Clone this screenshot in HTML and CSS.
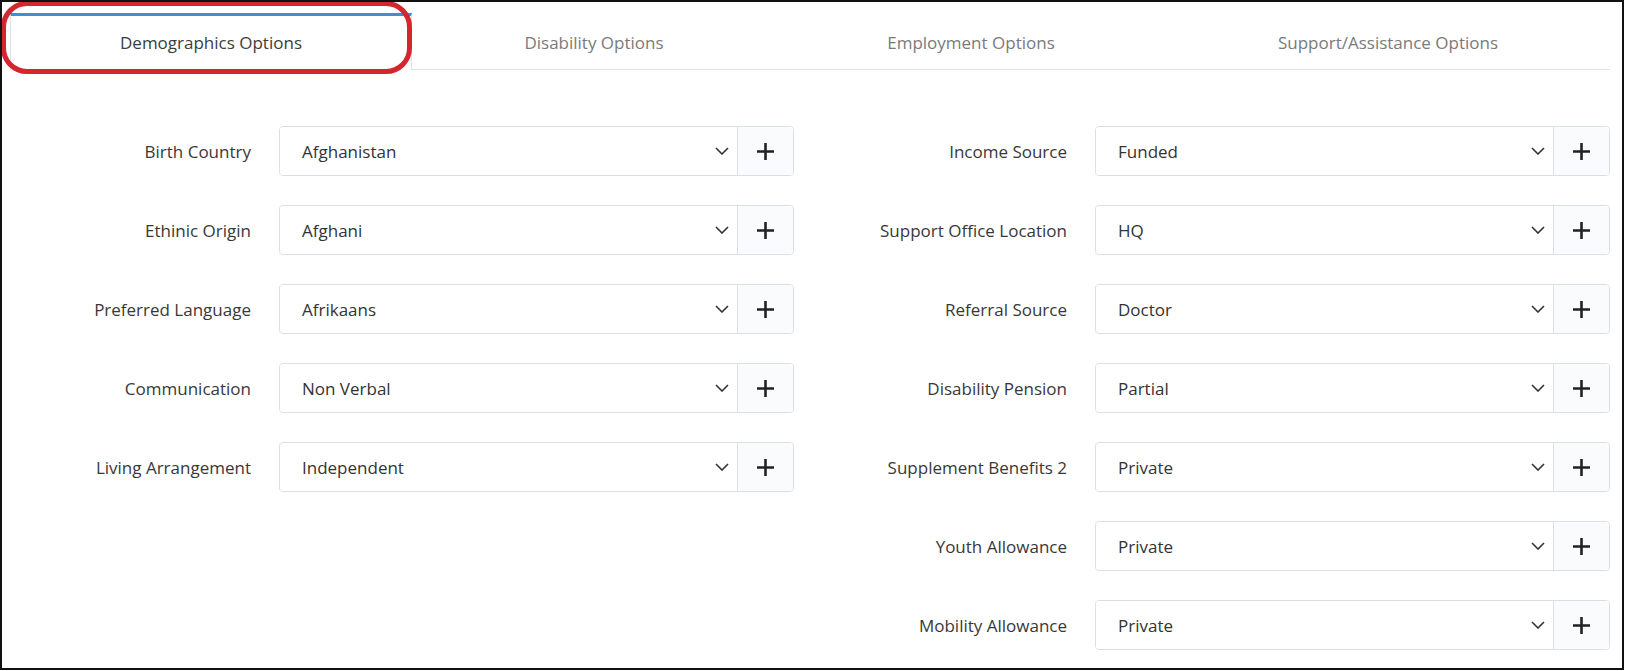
FILE: index.html
```html
<!DOCTYPE html>
<html lang="en">
<head>
<meta charset="utf-8">
<title>Demographics Options</title>
<link rel="stylesheet" href="styles.css">
</head>
<body>
<div class="frame">
  <div class="annot"></div>
  <nav class="tabs">
    <div class="tab active t1">Demographics Options</div>
    <div class="tab t2">Disability Options</div>
    <div class="tab t3">Employment Options</div>
    <div class="tab t4">Support/Assistance Options</div>
  </nav>
  <div class="form">
    <div class="col">
      <div class="row"><div class="label">Birth Country</div><div class="box"><div class="select"><span>Afghanistan</span><svg class="chev" width="14" height="8" viewBox="0 0 14 8"><polyline points="1,1 7,7 13,1"/></svg></div><div class="add"><svg width="17" height="17" viewBox="0 0 17 17"><path d="M8.5 0V17M0 8.5H17"/></svg></div></div></div>
      <div class="row"><div class="label">Ethinic Origin</div><div class="box"><div class="select"><span>Afghani</span><svg class="chev" width="14" height="8" viewBox="0 0 14 8"><polyline points="1,1 7,7 13,1"/></svg></div><div class="add"><svg width="17" height="17" viewBox="0 0 17 17"><path d="M8.5 0V17M0 8.5H17"/></svg></div></div></div>
      <div class="row"><div class="label">Preferred Language</div><div class="box"><div class="select"><span>Afrikaans</span><svg class="chev" width="14" height="8" viewBox="0 0 14 8"><polyline points="1,1 7,7 13,1"/></svg></div><div class="add"><svg width="17" height="17" viewBox="0 0 17 17"><path d="M8.5 0V17M0 8.5H17"/></svg></div></div></div>
      <div class="row"><div class="label">Communication</div><div class="box"><div class="select"><span>Non Verbal</span><svg class="chev" width="14" height="8" viewBox="0 0 14 8"><polyline points="1,1 7,7 13,1"/></svg></div><div class="add"><svg width="17" height="17" viewBox="0 0 17 17"><path d="M8.5 0V17M0 8.5H17"/></svg></div></div></div>
      <div class="row"><div class="label">Living Arrangement</div><div class="box"><div class="select"><span>Independent</span><svg class="chev" width="14" height="8" viewBox="0 0 14 8"><polyline points="1,1 7,7 13,1"/></svg></div><div class="add"><svg width="17" height="17" viewBox="0 0 17 17"><path d="M8.5 0V17M0 8.5H17"/></svg></div></div></div>
    </div>
    <div class="col">
      <div class="row"><div class="label">Income Source</div><div class="box"><div class="select"><span>Funded</span><svg class="chev" width="14" height="8" viewBox="0 0 14 8"><polyline points="1,1 7,7 13,1"/></svg></div><div class="add"><svg width="17" height="17" viewBox="0 0 17 17"><path d="M8.5 0V17M0 8.5H17"/></svg></div></div></div>
      <div class="row"><div class="label">Support Office Location</div><div class="box"><div class="select"><span>HQ</span><svg class="chev" width="14" height="8" viewBox="0 0 14 8"><polyline points="1,1 7,7 13,1"/></svg></div><div class="add"><svg width="17" height="17" viewBox="0 0 17 17"><path d="M8.5 0V17M0 8.5H17"/></svg></div></div></div>
      <div class="row"><div class="label">Referral Source</div><div class="box"><div class="select"><span>Doctor</span><svg class="chev" width="14" height="8" viewBox="0 0 14 8"><polyline points="1,1 7,7 13,1"/></svg></div><div class="add"><svg width="17" height="17" viewBox="0 0 17 17"><path d="M8.5 0V17M0 8.5H17"/></svg></div></div></div>
      <div class="row"><div class="label">Disability Pension</div><div class="box"><div class="select"><span>Partial</span><svg class="chev" width="14" height="8" viewBox="0 0 14 8"><polyline points="1,1 7,7 13,1"/></svg></div><div class="add"><svg width="17" height="17" viewBox="0 0 17 17"><path d="M8.5 0V17M0 8.5H17"/></svg></div></div></div>
      <div class="row"><div class="label">Supplement Benefits 2</div><div class="box"><div class="select"><span>Private</span><svg class="chev" width="14" height="8" viewBox="0 0 14 8"><polyline points="1,1 7,7 13,1"/></svg></div><div class="add"><svg width="17" height="17" viewBox="0 0 17 17"><path d="M8.5 0V17M0 8.5H17"/></svg></div></div></div>
      <div class="row"><div class="label">Youth Allowance</div><div class="box"><div class="select"><span>Private</span><svg class="chev" width="14" height="8" viewBox="0 0 14 8"><polyline points="1,1 7,7 13,1"/></svg></div><div class="add"><svg width="17" height="17" viewBox="0 0 17 17"><path d="M8.5 0V17M0 8.5H17"/></svg></div></div></div>
      <div class="row"><div class="label">Mobility Allowance</div><div class="box"><div class="select"><span>Private</span><svg class="chev" width="14" height="8" viewBox="0 0 14 8"><polyline points="1,1 7,7 13,1"/></svg></div><div class="add"><svg width="17" height="17" viewBox="0 0 17 17"><path d="M8.5 0V17M0 8.5H17"/></svg></div></div></div>
    </div>
  </div>
</div>
</body>
</html>
```
FILE: styles.css
```css
html, body {
  margin: 0;
  padding: 0;
  background: #ffffff;
}

body {
  font-family: "Open Sans", "Noto Sans", sans-serif;
  font-size: 17px;
  color: #333333;
}

.frame {
  position: relative;
  box-sizing: border-box;
  width: 1624px;
  height: 670px;
  border: 2px solid #111111;
  padding: 11px 0 0 8px;
  background: #ffffff;
  overflow: hidden;
}

.annot {
  position: absolute;
  top: -1px;
  left: -1px;
  width: 411px;
  height: 73px;
  box-sizing: border-box;
  border: 5px solid #d4262f;
  border-radius: 26px;
  z-index: 5;
  pointer-events: none;
}

.tabs {
  display: flex;
  width: 1600px;
  border-bottom: 1px solid #dee2e6;
}

.tab {
  box-sizing: border-box;
  height: 56px;
  display: flex;
  align-items: center;
  justify-content: center;
  border-top: 3px solid transparent;
  color: #7a7a7a;
  white-space: nowrap;
}

.tab.active {
  height: 57px;
  margin-bottom: -1px;
  border-top-color: #3d8fda;
  border-left: 1px solid #dee2e6;
  border-right: 1px solid #dee2e6;
  background: #ffffff;
  color: #3a3d40;
  padding-bottom: 1px;
}

.t1 { width: 402px; }
.t2 { width: 364px; }
.t3 { width: 390px; }
.t4 { width: 444px; }

.form {
  display: grid;
  grid-template-columns: 784px 800px;
  column-gap: 16px;
  margin-top: 56px;
}

.col {
  display: flex;
  flex-direction: column;
  gap: 29px;
}

.row {
  display: grid;
  grid-template-columns: 1fr 515px;
  column-gap: 28px;
  align-items: center;
}

.label {
  text-align: right;
  color: #383838;
  white-space: nowrap;
}

.box {
  box-sizing: border-box;
  height: 50px;
  display: flex;
  border: 1px solid #dcdfe3;
  border-radius: 4px;
  overflow: hidden;
}

.select {
  flex: 1;
  display: flex;
  align-items: center;
  justify-content: space-between;
  padding: 0 8px 0 22px;
  background: #ffffff;
  color: #333333;
}

.chev polyline {
  fill: none;
  stroke: #333333;
  stroke-width: 1.6;
}

.add {
  box-sizing: border-box;
  width: 56px;
  display: flex;
  align-items: center;
  justify-content: center;
  border-left: 1px solid #dcdfe3;
  background: #fafbfc;
}

.add path {
  fill: none;
  stroke: #222222;
  stroke-width: 2.6;
}
```
